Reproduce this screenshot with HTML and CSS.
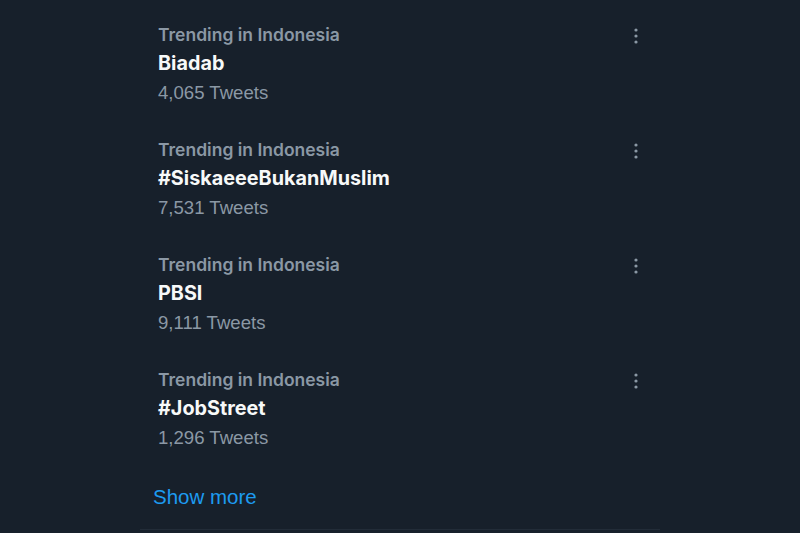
FILE: index.html
```html
<!DOCTYPE html>
<html>
<head>
    <title>Trends</title>
    <link rel="stylesheet" href="styles.css">
</head>
<body>
    <div class="panel">
        <div class="trend">
            <div class="trend-text">
                <div class="trend-where">Trending in Indonesia</div>
                <div class="trend-name">Biadab</div>
                <div class="trend-count">4,065 Tweets</div>
            </div>
            <div class="more">
                <svg viewBox="0 0 4 16" width="4" height="16"><circle cx="2" cy="2" r="1.6"/><circle cx="2" cy="8" r="1.6"/><circle cx="2" cy="14" r="1.6"/></svg>
            </div>
        </div>
        <div class="trend">
            <div class="trend-text">
                <div class="trend-where">Trending in Indonesia</div>
                <div class="trend-name">#SiskaeeeBukanMuslim</div>
                <div class="trend-count">7,531 Tweets</div>
            </div>
            <div class="more">
                <svg viewBox="0 0 4 16" width="4" height="16"><circle cx="2" cy="2" r="1.6"/><circle cx="2" cy="8" r="1.6"/><circle cx="2" cy="14" r="1.6"/></svg>
            </div>
        </div>
        <div class="trend">
            <div class="trend-text">
                <div class="trend-where">Trending in Indonesia</div>
                <div class="trend-name">PBSI</div>
                <div class="trend-count">9,111 Tweets</div>
            </div>
            <div class="more">
                <svg viewBox="0 0 4 16" width="4" height="16"><circle cx="2" cy="2" r="1.6"/><circle cx="2" cy="8" r="1.6"/><circle cx="2" cy="14" r="1.6"/></svg>
            </div>
        </div>
        <div class="trend">
            <div class="trend-text">
                <div class="trend-where">Trending in Indonesia</div>
                <div class="trend-name">#JobStreet</div>
                <div class="trend-count">1,296 Tweets</div>
            </div>
            <div class="more">
                <svg viewBox="0 0 4 16" width="4" height="16"><circle cx="2" cy="2" r="1.6"/><circle cx="2" cy="8" r="1.6"/><circle cx="2" cy="14" r="1.6"/></svg>
            </div>
        </div>
        <div class="show-more">Show more</div>
    </div>
</body>
</html>
```

FILE: styles.css
```css
body {
    margin: 0;
    background: #17202b;
    font-family: "Liberation Sans", Arial, sans-serif;
}
.panel {
    width: 520px;
    margin-left: 140px;
    padding-top: 21px;
    border-bottom: 1px solid #222c38;
    height: 508px;
}
.trend {
    display: flex;
    justify-content: space-between;
    padding: 0 22px 0 18px;
    height: 115px;
}
.trend-where {
    color: #8b98a5;
    font-family: Inter, "Liberation Sans", sans-serif;
    font-size: 17.5px;
    font-weight: 600;
    line-height: 28px;
}
.trend-name {
    color: #f7f9f9;
    font-family: Inter, "Liberation Sans", sans-serif;
    font-size: 19.8px;
    font-weight: 700;
    line-height: 29px;
}
.trend-count {
    color: #8b98a5;
    font-size: 18.6px;
    line-height: 29px;
}
.more {
    padding-top: 7px;
}
.more svg {
    fill: #8b98a5;
    display: block;
}
.show-more {
    color: #1d9bf0;
    font-size: 20.5px;
    padding: 0 0 0 13px;
    margin-top: 1px;
    line-height: 30px;
}
```
